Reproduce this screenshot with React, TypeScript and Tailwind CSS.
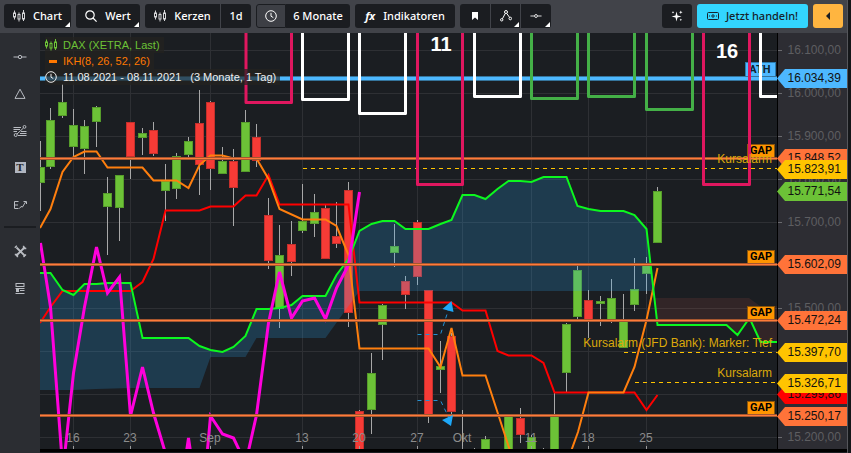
import type { ReactNode } from "react";

type Candle = [x: number, high: number, top: number, bottom: number, low: number, up: 0 | 1];

const GREEN = "#6cc237";
const RED = "#f63b36";

const candles: Candle[] = [
    [40.5, 141, 167, 183, 211, 1],
    [50.5, 108, 120, 167, 169, 1],
    [62.5, 84, 102, 116, 118, 1],
    [73.5, 109, 125, 147, 157, 1],
    [84.5, 120, 126, 149, 174, 1],
    [96.5, 106, 107, 122, 147, 1],
    [107.5, 177, 193, 207, 255, 1],
    [119.5, 175, 175, 208, 241, 1],
    [130.5, 122, 122, 157, 179, 0],
    [142.5, 128, 133, 138, 155, 1],
    [153.5, 122, 130, 154, 156, 0],
    [165.5, 164, 181, 191, 221, 1],
    [176.5, 153, 156, 189, 199, 1],
    [188.5, 137, 141, 155, 158, 1],
    [199.5, 90, 123, 165, 195, 0],
    [210.5, 101, 102, 169, 190, 0],
    [222.5, 147, 161, 174, 174, 1],
    [233.5, 149, 161, 188, 226, 0],
    [245.5, 110, 122, 172, 172, 1],
    [256.5, 124, 137, 161, 167, 0],
    [268.5, 198, 215, 261, 269, 0],
    [279.5, 225, 255, 309, 328, 1],
    [291.5, 221, 244, 262, 276, 0],
    [302.5, 184, 221, 231, 233, 1],
    [314.5, 194, 212, 224, 237, 1],
    [325.5, 205, 208, 259, 259, 0],
    [336.5, 202, 236, 244, 248, 0],
    [348.5, 182, 190, 313, 327, 0],
    [359.5, 410, 411, 470, 470, 0],
    [371.5, 353, 373, 410, 434, 1],
    [382.5, 304, 305, 325, 360, 1],
    [394.5, 224, 246, 253, 267, 1],
    [405.5, 276, 281, 295, 309, 0],
    [417.5, 220, 222, 277, 285, 0],
    [428.5, 290, 290, 417, 423, 0],
    [440.5, 341, 366, 370, 393, 1],
    [451.5, 333, 336, 412, 415, 0],
    [462.5, 410, 460, 470, 470, 0],
    [474.5, 448, 460, 470, 470, 1],
    [485.5, 436, 439, 470, 470, 1],
    [508.5, 414, 416, 470, 470, 1],
    [520.5, 408, 418, 435, 443, 0],
    [531.5, 435, 437, 470, 470, 1],
    [543.5, 448, 460, 470, 470, 1],
    [554.5, 392, 416, 470, 470, 1],
    [566.5, 323, 324, 373, 392, 1],
    [577.5, 264, 270, 317, 322, 1],
    [588.5, 290, 300, 320, 338, 0],
    [600.5, 296, 301, 304, 326, 1],
    [611.5, 279, 298, 320, 323, 1],
    [623.5, 294, 320, 348, 348, 1],
    [634.5, 258, 289, 305, 311, 1],
    [646.5, 257, 265, 274, 294, 1],
    [657.5, 187, 191, 243, 243, 1],
];

const gridY = [50.5, 93.5, 136.5, 179.5, 222.5, 265.5, 308.5, 351.5, 394.5, 437.5];

const dates: [number, string][] = [
    [73.5, "16"],
    [130.5, "23"],
    [210.5, "Sep"],
    [302.5, "13"],
    [359.5, "20"],
    [417.5, "27"],
    [462.5, "Okt"],
    [531.5, "11"],
    [588.5, "18"],
    [646.5, "25"],
];

const prices: [number, string][] = [
    [50.5, "16.100,00"],
    [93.5, "16.000,00"],
    [136.5, "15.900,00"],
    [179.5, "15.800,00"],
    [222.5, "15.700,00"],
    [308.5, "15.500,00"],
    [437.5, "15.200,00"],
];

const tags: [number, string, string][] = [
    [78.5, "16.034,39", "#4db8ff"],
    [158.5, "15.848,52", "#ff7339"],
    [169.5, "15.823,91", "#ffc400"],
    [191.5, "15.771,54", "#6cc237"],
    [264.5, "15.602,09", "#ff7339"],
    [320.5, "15.472,24", "#ff7339"],
    [352.5, "15.397,70", "#ffc400"],
    [394.5, "15.299,86", "#ff0000"],
    [383.5, "15.326,71", "#ffc400"],
    [416.5, "15.250,17", "#ff7339"],
];

const gaps = [158.5, 264.5, 320.5, 415.5];

// left, right, bottom, colour
const frames: [number, number, number, string][] = [
    [246, 291.5, 102.5, "#e0175f"],
    [302.5, 348.5, 99.5, "#ffffff"],
    [359.5, 405.5, 113.5, "#ffffff"],
    [417.5, 462.5, 184.5, "#e0175f"],
    [474.5, 520.5, 96.5, "#ffffff"],
    [531.5, 577.5, 98.5, "#44b047"],
    [588.5, 634.5, 96.5, "#44b047"],
    [646.5, 692.5, 109.5, "#44b047"],
    [703.5, 749.5, 184.5, "#e0175f"],
    [760.5, 806.5, 96.5, "#ffffff"],
];

const spanA =
    "40,273 50.5,273 62.5,290 73.5,295 84.5,284 96.5,284 107.5,283 130.5,283 142.5,338 188.5,338 199.5,346 210.5,350 222.5,352 233.5,347 245.5,336 256.5,309 268.5,309 279.5,308 291.5,305 302.5,296 325.5,296 336.5,275 348.5,259 359.5,231 371.5,224 382.5,221 394.5,221 405.5,229 428.5,229 440.5,224 451.5,220 462.5,195 474.5,195 485.5,199 497.5,189 508.5,181 520.5,181 531.5,182 543.5,177 566.5,177 577.5,206 588.5,209 600.5,211 623.5,211 634.5,215 646.5,229";
const spanATail = "657.5,325 726.5,325 737.5,335 749.5,318 760.5,342 777,342";
const spanB =
    "654,291 359.5,291 348.5,306 325.5,338 256.5,338 245.5,357 210.5,357 199.5,388 130.5,388 96.5,389 73.5,390 40,390";
const baseLine =
    "40,323 50.5,307 62.5,291 130.5,291 142.5,282 153.5,259 165.5,210.5 199.5,210.5 210.5,206.5 233.5,206.5 245.5,195.5 256.5,195.5 268.5,175 279.5,204.5 348.5,204.5 359.5,302.5 451.5,302.5 462.5,310.5 485.5,310.5 497.5,351 508.5,355.5 531.5,355.5 543.5,363 554.5,392.5 634.5,392.5 646.5,410 657.5,395";
const turningLine =
    "40,228 50.5,209 62.5,172 73.5,157 84.5,151.5 96.5,151.5 107.5,167.5 142.5,167.5 153.5,180.5 176.5,180.5 188.5,188 199.5,165 210.5,155.5 222.5,155.5 233.5,158.5 256.5,158.5 268.5,179 279.5,209 302.5,219.5 325.5,219.5 336.5,226 348.5,255 359.5,348.5 428.5,348.5 440.5,367 451.5,328 462.5,375.5 485.5,375.5 508.5,446 520.5,480 560,480 571.5,450 578,432 588.5,392.5 623.5,392.5 634.5,367 646.5,320 657.5,268";
const laggingLine =
    "40.5,243 50.5,307 61.5,452 65,452 73.5,373 84.5,307 96.5,247 107.5,293 119.5,277 130.5,416 142.5,367 153.5,413 166,455 186,455 188.5,438 191,455 207,455 210.5,416 222.5,434 233.5,438 243,458 248,453 256.5,415 268.5,323 279.5,272 291.5,318 302.5,301 314.5,298 325.5,319 336.5,288 348.5,265 359.5,192";

const CandlesIcon = ({ className = "" }: { className?: string }) => (
    <svg viewBox="0 0 12 12" className={className} fill="none" stroke="currentColor" aria-hidden="true">
        <path d="M1.5 0.5v3M1.5 7v2.5M6 2.5v2M6 9v2.5M10.5 0v3M10.5 9v2" />
        <rect x="0.5" y="3" width="2" height="4" />
        <rect x="5" y="4.5" width="2" height="4.5" />
        <rect x="9.5" y="3" width="2" height="6" />
    </svg>
);

const ClockIcon = ({ className = "" }: { className?: string }) => (
    <svg viewBox="0 0 12 12" className={className} fill="none" stroke="currentColor" aria-hidden="true">
        <circle cx="6" cy="6" r="5.3" />
        <path d="M6 2.8V6.2L8.3 7.6" />
    </svg>
);

const SliderIcon = ({ className = "" }: { className?: string }) => (
    <svg viewBox="0 0 14 6" className={className} fill="none" stroke="currentColor" aria-hidden="true">
        <path d="M0.5 3H5M9 3h4.5" />
        <circle cx="7" cy="3" r="1.7" />
    </svg>
);

const Corner = () => (
    <svg viewBox="0 0 5 5" className="absolute right-px bottom-px h-[5px] w-[5px]" aria-hidden="true">
        <path d="M5 0V5H0Z" fill="#fff" />
    </svg>
);

interface ToolButtonProps {
    label?: string;
    className: string;
    corner?: boolean;
    children: ReactNode;
}

const ToolButton = ({ label, className, corner, children }: ToolButtonProps) => (
    <button
        type="button"
        aria-label={label}
        className={`relative flex h-6 shrink-0 items-center justify-center whitespace-nowrap ${className}`}
    >
        {children}
        {corner && <Corner />}
    </button>
);

const Toolbar = () => (
    <header className="flex h-[33px] items-center bg-[#414349] px-1 pb-px font-['Noto_Sans',sans-serif] text-[11px] font-medium text-white">
        <div className="flex items-center gap-[5px]">
            <ToolButton corner className="w-[67px] gap-2 rounded-[3px] bg-[#1b1d21]">
                <CandlesIcon className="h-3 w-3 text-[#d5d5d8]" />
                Chart
            </ToolButton>
            <ToolButton corner className="w-16 gap-2 rounded-[3px] bg-[#1b1d21]">
                <svg viewBox="0 0 12 12" className="h-3 w-3" fill="none" stroke="currentColor" strokeWidth="1.2" aria-hidden="true">
                    <circle cx="5" cy="5" r="4.2" />
                    <path d="M8 8l3.6 3.6" />
                </svg>
                Wert
            </ToolButton>
            <div className="flex gap-px">
                <ToolButton className="w-[75px] gap-2 rounded-l-[3px] bg-[#1b1d21]">
                    <CandlesIcon className="h-3 w-3 text-[#d5d5d8]" />
                    Kerzen
                </ToolButton>
                <ToolButton className="w-[30px] rounded-r-[3px] bg-[#1b1d21]">1d</ToolButton>
            </div>
            <div className="flex">
                <ToolButton label="Zeitraum" className="w-[30px] rounded-l-[3px] border border-[#1b1d21] bg-[#3d3f45]">
                    <ClockIcon className="h-3 w-3" />
                </ToolButton>
                <ToolButton className="w-16 rounded-r-[3px] bg-[#1b1d21]">6 Monate</ToolButton>
            </div>
            <ToolButton className="w-[100px] gap-2 rounded-[3px] bg-[#1b1d21]">
                <span className="font-bold italic">fx</span>
                Indikatoren
            </ToolButton>
            <div className="flex gap-px">
                <ToolButton label="Lesezeichen" className="w-[30px] rounded-l-[3px] bg-[#1b1d21]">
                    <svg viewBox="0 0 6 8" className="h-2 w-1.5" aria-hidden="true">
                        <path d="M0 0H6V8L3 5.5L0 8Z" fill="#fff" />
                    </svg>
                </ToolButton>
                <ToolButton label="Linien" corner className="w-[29px] bg-[#1b1d21]">
                    <svg viewBox="0 0 12 12" className="h-3 w-3" fill="none" stroke="currentColor" aria-hidden="true">
                        <circle cx="1.7" cy="9.8" r="1.2" />
                        <circle cx="6" cy="2" r="1.5" />
                        <circle cx="10.3" cy="8.5" r="1.3" />
                        <path d="M2.4 8.8L5.3 3.4M6.7 3.4L9.6 7.4" />
                    </svg>
                </ToolButton>
                <ToolButton label="Horizontale" corner className="w-[30px] rounded-r-[3px] bg-[#1b1d21]">
                    <SliderIcon className="h-1.5 w-3" />
                </ToolButton>
            </div>
        </div>
        <div className="ml-auto flex items-center gap-[5px]">
            <ToolButton label="Assistent" className="w-[30px] rounded-[3px] bg-[#1b1d21]">
                <svg viewBox="0 0 12 12" className="h-3 w-3" fill="#fff" aria-hidden="true">
                    <path d="M5.500 1.500L6.500 5.500L10.500 6.500L6.500 7.500L5.500 11.500L4.500 7.500L0.500 6.500L4.500 5.500Z" />
                    <path d="M9.800 0.500l.5 1.300 1.300.5-1.300.5L9.800 4.100l-.5-1.300-1.300-.5 1.300-.5zM2 1l.4.9.9.4-.9.4L2 3.600l-.4-.9-.9-.4.9-.4zM9.800 8.500l.4.900.9.400-.9.400-.4.900-.4-.9-.9-.4.9-.4z" />
                </svg>
            </ToolButton>
            <ToolButton className="w-[111px] gap-[7px] rounded-[3px] bg-[#33d6ff] text-[#17222b]">
                <svg viewBox="0 0 12 8" className="h-2 w-3" fill="none" stroke="currentColor" aria-hidden="true">
                    <rect x="0.5" y="0.5" width="11" height="7" rx="1" />
                    <circle cx="6" cy="4" r="1.2" />
                    <path d="M2 4h1M9 4h1" />
                </svg>
                Jetzt handeln!
            </ToolButton>
            <ToolButton label="Einklappen" className="w-[30px] rounded-[3px] bg-[#ffb540]">
                <svg viewBox="0 0 4 8" className="h-2 w-1" aria-hidden="true">
                    <path d="M4 0V8L0 4Z" fill="#1b1d21" />
                </svg>
            </ToolButton>
        </div>
    </header>
);

const SideButton = ({ label, children }: { label: string; children: ReactNode }) => (
    <button type="button" aria-label={label} className="flex h-[37px] w-full items-center justify-center">
        {children}
    </button>
);

const Sidebar = () => (
    <nav className="flex w-10 shrink-0 flex-col bg-[#2b2d32] pt-[5px] text-[#b9bcc2]">
        <SideButton label="Horizontale Linie">
            <SliderIcon className="h-1.5 w-[14px]" />
        </SideButton>
        <SideButton label="Formen">
            <svg viewBox="0 0 12 11" className="h-[11px] w-3" fill="none" stroke="currentColor">
                <path d="M6 1.2L11 10.4H1Z" />
            </svg>
        </SideButton>
        <SideButton label="Fibonacci">
            <svg viewBox="0 0 14 12" className="h-3 w-[14px]" fill="none" stroke="currentColor">
                <path d="M0.5 2.5H8M0.5 4.5H7M0.5 6.5H4M8 6.5H13.5M7 8.5H13.5M5 10.5H13.5M4 9L10.5 3" />
                <circle cx="2.7" cy="10" r="1.5" />
                <circle cx="11.5" cy="1.9" r="1.4" />
            </svg>
        </SideButton>
        <SideButton label="Text">
            <span className="flex h-[11px] w-[11px] items-center justify-center bg-[#b0b5c0] font-['Liberation_Serif',serif] text-[11px] leading-none font-bold text-[#24262b]">
                T
            </span>
        </SideButton>
        <SideButton label="Elliott">
            <svg viewBox="0 0 13 10" className="h-[10px] w-[13px]" fill="none" stroke="currentColor">
                <path d="M4.5 1.5H0.5V8.5H4.5M0.5 5H4M5.5 8.5L7 6.5L8.5 7L11.5 2M9.5 1.5H12.5V4" />
            </svg>
        </SideButton>
        <hr className="mx-1 mt-[3px] border-t-2 border-[#1b1d21]" />
        <div className="pt-[5px]">
            <SideButton label="Einstellungen">
                <svg viewBox="0 0 13 13" className="h-[13px] w-[13px]" fill="none" stroke="currentColor" strokeWidth="1.8">
                    <path d="M2.5 2.5L11 11M2 11L11 2" />
                    <path d="M0.8 2.8L2.8 0.8M9.5 0.8V3.5H12.3M0.8 9.5H3.5V12.3M9.5 12L12 9.5" strokeWidth="1.3" />
                </svg>
            </SideButton>
            <SideButton label="Ansicht">
                <svg viewBox="0 0 10 11" className="h-[11px] w-[10px]" fill="none" stroke="currentColor">
                    <rect x="1" y="0.5" width="8" height="3" />
                    <path d="M0.5 5.5H9.5M5 7.5H9.5M0.5 10.5H9.5" />
                    <rect x="1" y="6" width="3" height="3" fill="currentColor" stroke="none" />
                </svg>
            </SideButton>
        </div>
    </nav>
);

const Legend = () => (
    <div className="absolute top-1 left-[5px] flex flex-col items-start font-['Liberation_Sans',sans-serif] text-[11px] leading-4">
        <div className="flex items-center gap-[6px] bg-[#23221f]/70 pr-1 text-[#6cc237]">
            <CandlesIcon className="h-3 w-3" />
            <span>DAX (XETRA, Last)</span>
        </div>
        <div className="flex items-center gap-[6px] bg-[#23221f]/70 pr-1 text-[#ff7800]">
            <span className="flex w-3 justify-end">
                <span className="h-[3px] w-2 bg-[#ff7800]" />
            </span>
            <span>IKH(8, 26, 52, 26)</span>
        </div>
        <div className="flex items-center gap-[6px] bg-[#23221f]/70 pr-1 text-[#eeeeee]">
            <ClockIcon className="h-3 w-3" />
            <span className="mr-[3px]">11.08.2021 - 08.11.2021</span>
            <span>(3 Monate, 1 Tag)</span>
        </div>
    </div>
);

const Chart = () => (
    <svg
        viewBox="40 33 807 420"
        className="block h-auto w-full bg-[#1b1e22] font-['Liberation_Sans',sans-serif] text-xs"
        role="img"
        aria-label="DAX"
    >
        <defs>
            <clipPath id="plot">
                <rect x="40" y="33" width="737" height="416" />
            </clipPath>
        </defs>

        <g clipPath="url(#plot)">
            {/* Grid */}
            <g stroke="#2e3034">
                {gridY.map((y) => (
                    <path key={y} d={`M40 ${y}H777`} />
                ))}
                {dates.map(([x]) => (
                    <path key={x} d={`M${x} 33V449`} />
                ))}
            </g>

            {/* Candles */}
            {candles.map(([x, high, top, bottom, low, up]) => (
                <g key={x}>
                    <path d={`M${x} ${high}V${low}`} stroke="#a8a8a8" />
                    <rect
                        x={x - 4}
                        y={top + 0.5}
                        width={8}
                        height={Math.max(bottom - top - 1, 1)}
                        fill={up ? GREEN : RED}
                        stroke={up ? "#569c2b" : "#c4302c"}
                    />
                </g>
            ))}

            {/* Ichimoku cloud */}
            <polygon points={`${spanA} ${spanB}`} fill="#2bafff" fillOpacity="0.2" />
            <polygon
                points="654,298 749,298 760,306 777,306 777,342 760.5,342 749.5,318 737.5,335 726.5,325 657.5,325"
                fill="#ff6a5a"
                fillOpacity="0.1"
            />

            <g fill="none" strokeWidth="2">
                <polyline points={baseLine} stroke="#ff0000" />
                <polyline points={turningLine} stroke="#ff7f0e" />
                <polyline points={`${spanA} ${spanATail}`} stroke="#0cf71f" />
                <polyline points={laggingLine} stroke="#ff00dc" strokeWidth="3" />
            </g>

            {/* Date axis */}
            <g fill="#8c8c8c" textAnchor="middle">
                {dates.map(([x, label]) => (
                    <text key={x} x={x - 0.5} y={442}>
                        {label}
                    </text>
                ))}
            </g>
            <g stroke="#9a9a9a">
                {dates.map(([x]) => (
                    <path key={x} d={`M${x} 446v3`} />
                ))}
            </g>

            {/* Record high and gap levels */}
            <rect x="745.5" y="62.5" width="30" height="16" fill="#4db8ff" stroke="#2b7cb0" />
            <text x="760" y="73" fill="#10222f" textAnchor="middle" className="font-['Roboto',sans-serif] text-[11px] font-bold">
                ATH
            </text>
            <path d="M40 78.5H777" stroke="#35759c" strokeWidth="5" />
            <path d="M40 78.5H777" stroke="#4db8ff" strokeWidth="3" />
            {gaps.map((y) => (
                <g key={y}>
                    <rect x="747.5" y={y - 14} width="27" height="14" fill="#ff9500" stroke="#8a560c" />
                    <path d={`M40 ${y}H777`} stroke="#a5562f" strokeWidth="3" />
                    <path d={`M40 ${y}H777`} stroke="#ff7b3a" />
                    <text
                        x="761"
                        y={y - 4.5}
                        fill="#000"
                        textAnchor="middle"
                        className="font-['Roboto',sans-serif] text-[11px] font-bold"
                    >
                        GAP
                    </text>
                </g>
            ))}

            {/* Alarms */}
            <g stroke="#ffc400" strokeDasharray="4 4">
                <path d="M303 168.5H777" />
                <path d="M624 352.5H777" />
                <path d="M635 382.5H777" />
            </g>

            {/* Price frames */}
            {frames.map(([left, right, bottom, color]) => (
                <path
                    key={left}
                    d={`M${left} 30V${bottom}H${right}V30`}
                    fill="none"
                    stroke={color}
                    strokeWidth="3"
                    strokeLinejoin="round"
                />
            ))}
            <g fill="#dba90a" textAnchor="end">
                <text x="772" y="163">Kursalarm</text>
                <text x="772" y="347">Kursalarm (JFD Bank): Marker: Tief</text>
                <text x="772" y="377">Kursalarm</text>
            </g>
            <g fill="#fff" textAnchor="middle" className="text-xl font-bold">
                <text x="441" y="51">11</text>
                <text x="727" y="58">16</text>
            </g>

            {/* Arrows */}
            <g fill="none" stroke="#2491d4" strokeDasharray="4 4">
                <path d="M417.5 334.5H440.5L449 308" />
                <path d="M417.5 400.5H440.5L449 418" />
            </g>
            <path d="M442.5 309L451.5 301L453.5 312Z M442 420L453 415L451 426Z" fill="#1ea8f8" />
        </g>

        {/* Price axis */}
        <rect x="777" y="33" width="1" height="416" fill="#000" />
        <rect x="778" y="33" width="69" height="416" fill="#2d2d33" />
        {prices.map(([y, label]) => (
            <g key={label}>
                <path d={`M778 ${y}h4`} stroke="#6a6a6e" />
                <text x="787.5" y={y + 3} fill="#5e5e61">
                    {label}
                </text>
            </g>
        ))}
        {tags.map(([y, label, color]) => (
            <g key={label}>
                <path d={`M777 ${y}L785 ${y - 9.5}H847V${y + 9.5}H785Z`} fill={color} />
                <text x="787.5" y={y + 3.5} fill="#111">
                    {label}
                </text>
            </g>
        ))}
        <rect x="40" y="449" width="807" height="3" fill="#000" />
    </svg>
);

export default function App() {
    return (
        <div className="flex min-h-screen bg-[#15171a]">
            <div className="flex min-w-0 flex-1 flex-col">
                <Toolbar />
                <main className="flex flex-1">
                    <Sidebar />
                    <div className="relative min-w-0 flex-1 bg-[#1b1e22]">
                        <Chart />
                        <Legend />
                    </div>
                </main>
            </div>
            <div className="w-1 shrink-0 border-l border-[#55565b]" />
        </div>
    );
}
